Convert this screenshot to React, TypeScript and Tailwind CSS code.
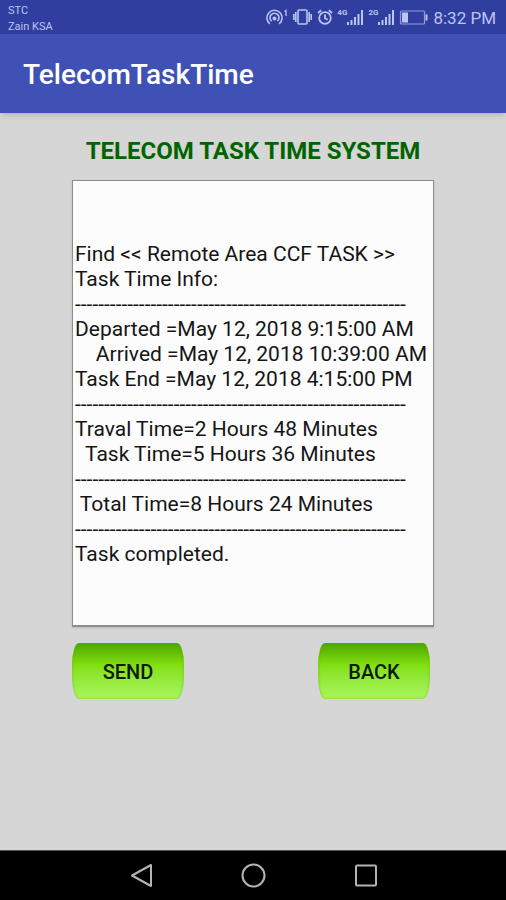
import { ButtonHTMLAttributes } from 'react';

const DIVIDER = '-'.repeat(57);

const TASK_REPORT = [
  'Find << Remote Area CCF TASK >>',
  'Task Time Info:',
  DIVIDER,
  'Departed =May 12, 2018 9:15:00 AM',
  '    Arrived =May 12, 2018 10:39:00 AM',
  'Task End =May 12, 2018 4:15:00 PM',
  DIVIDER,
  'Traval Time=2 Hours 48 Minutes',
  '  Task Time=5 Hours 36 Minutes',
  DIVIDER,
  ' Total Time=8 Hours 24 Minutes',
  DIVIDER,
  'Task completed.',
].join('\n');

function HotspotIcon() {
  return (
    <svg width="24" height="18" viewBox="0 0 24 18" fill="none" stroke="currentColor" strokeWidth="1.6" aria-hidden="true">
      <path d="M4.800 15.800A7.600 7.600 0 1 1 14.200 15.800" />
      <path d="M6.600 13.200A4.500 4.500 0 1 1 12.400 13.200" />
      <circle cx="9.500" cy="10.400" r="2" fill="currentColor" stroke="none" />
      <path d="M19.500 3.500L21 2.500V8" strokeWidth="1.3" />
    </svg>
  );
}

function VibrateIcon() {
  return (
    <svg width="20" height="18" viewBox="0 0 20 18" fill="none" stroke="currentColor" strokeWidth="1.600" aria-hidden="true">
      <rect x="5" y="2" width="9" height="14" rx="1" />
      <path d="M2.800 4V14M16.200 4V14M0.800 6V12M18.200 6V12" />
    </svg>
  );
}

function AlarmIcon() {
  return (
    <svg width="16" height="18" viewBox="0 0 16 18" fill="none" stroke="currentColor" strokeWidth="1.8" aria-hidden="true">
      <circle cx="8" cy="10" r="5.8" />
      <path d="M8 6.500V10.200L10.600 11.800M1 5L4.200 2.200M15 5L11.800 2.200" />
    </svg>
  );
}

function SignalBars({ network }: { network: string }) {
  return (
    <span className="flex items-end">
      <span className="self-start text-[8px] leading-[10px] font-bold">{network}</span>
      <svg width="17" height="18" viewBox="0 0 17 18" fill="currentColor" aria-hidden="true">
        <path d="M0 14h2v3H0zM3.500 12h2v5h-2zM7 9h2v8H7zM10.500 6h2v11h-2zM14 2h2v15h-2z" />
      </svg>
    </span>
  );
}

function BatteryIcon() {
  return (
    <svg width="30" height="18" viewBox="0 0 30 18" fill="none" stroke="currentColor" aria-hidden="true">
      <rect x="1.500" y="3" width="24" height="13" rx="1" strokeWidth="1.2" strokeOpacity="0.7" />
      <rect x="3" y="4.500" width="6" height="10" fill="currentColor" stroke="none" />
      <path d="M27.500 6.500V12.500" strokeWidth="2" />
    </svg>
  );
}

function StatusBar() {
  return (
    <div className="flex h-[34px] items-center justify-between bg-[#303f9f] pr-[10px] pl-2 text-[#bcc4f2]">
      <div className="pt-[3px] text-[11px] leading-4">
        <p>STC</p>
        <p>Zain KSA</p>
      </div>
      <div className="flex items-center gap-1">
        <HotspotIcon />
        <VibrateIcon />
        <AlarmIcon />
        <SignalBars network="4G" />
        <SignalBars network="2G" />
        <BatteryIcon />
        <span className="pt-px text-[17px] leading-5">8:32 PM</span>
      </div>
    </div>
  );
}

function GlossyButton({ children, ...props }: ButtonHTMLAttributes<HTMLButtonElement>) {
  return (
    <button
      type="button"
      className="h-14 w-28 rounded-[7px/22px] bg-linear-to-b from-[#4ba800] via-[#83e010] via-40% to-[#aaf65c] pt-[2px] text-xl font-medium text-[#0c1a00] inset-shadow-[0_0_3px_#4ba80080]"
      {...props}
    >
      {children}
    </button>
  );
}

function NavigationBar() {
  return (
    <nav className="flex h-[50px] items-center justify-center gap-[86px] border-t border-[#555] bg-black text-[#b4b4b4]">
      <button type="button" aria-label="Back">
        <svg width="26" height="26" viewBox="0 0 26 26" fill="none" stroke="currentColor" strokeWidth="2" strokeLinejoin="round">
          <path d="M23 2V23L4 12.500Z" />
        </svg>
      </button>
      <button type="button" aria-label="Home">
        <svg width="26" height="26" viewBox="0 0 26 26" fill="none" stroke="currentColor" strokeWidth="2">
          <circle cx="13.500" cy="12.500" r="11" />
        </svg>
      </button>
      <button type="button" aria-label="Recent apps">
        <svg width="26" height="26" viewBox="0 0 26 26" fill="none" stroke="currentColor" strokeWidth="2">
          <rect x="4" y="2.500" width="20" height="20" rx="1" />
        </svg>
      </button>
    </nav>
  );
}

function App() {
  return (
    <div className="flex min-h-screen flex-col bg-[#d6d6d6] font-[Roboto,sans-serif]">
      <StatusBar />
      <header className="flex h-[79px] items-center bg-[#3f51b5] px-[23px] pt-[2px] shadow-md">
        <h1 className="text-[28px] leading-8 font-medium text-white">TelecomTaskTime</h1>
      </header>
      <main className="flex flex-1 flex-col px-[72px] pt-6">
        <h2 className="text-center text-2xl leading-7 font-bold whitespace-nowrap text-[#006400]">
          TELECOM TASK TIME SYSTEM
        </h2>
        <textarea
          readOnly
          aria-label="Task time info"
          rows={13}
          value={TASK_REPORT}
          className="mt-[15px] block w-full resize-none overflow-hidden border border-b-2 border-[#8e8e8a] bg-[#fcfcfc] pt-[61px] pb-[58px] pl-[2px] text-[21px] leading-[25px] whitespace-pre text-[#151515] shadow outline-none"
        />
        <div className="mt-4 flex justify-between pr-1">
          <GlossyButton>SEND</GlossyButton>
          <GlossyButton>BACK</GlossyButton>
        </div>
      </main>
      <NavigationBar />
    </div>
  );
}

export default App;
